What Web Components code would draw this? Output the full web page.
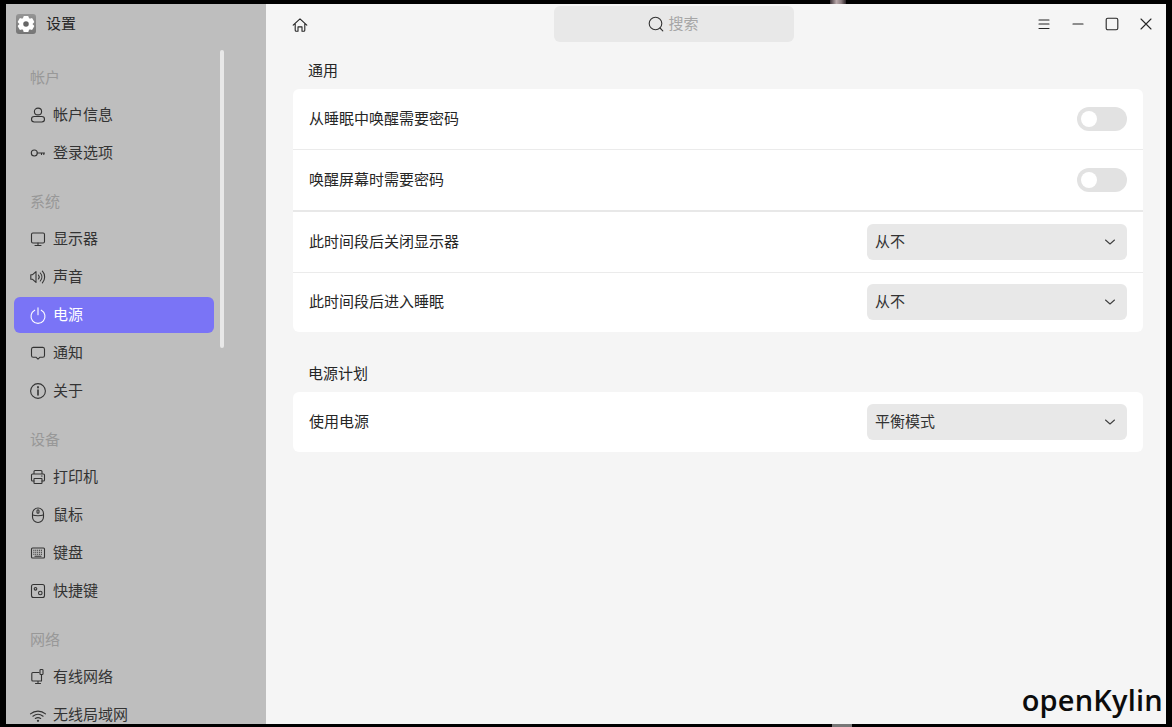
<!DOCTYPE html>
<html><head><meta charset="utf-8"><style>
html,body{margin:0;height:100%;background:#000;overflow:hidden}
body{font-family:"Noto Sans CJK SC","Noto Sans",sans-serif;font-size:15px;color:#262626}
</style></head><body>
<template id="t-icon"><style>:host{display:inline-flex;width:var(--s,18px);height:var(--s,18px);flex:none}svg{width:100%;height:100%;fill:none;stroke:currentColor;stroke-width:1.1;stroke-linecap:round;stroke-linejoin:round}</style><svg viewBox="0 0 18 18"></svg></template>
<script>
const ICONS={
user:'<ellipse cx="9" cy="5.5" rx="3.6" ry="3.400"/><rect x="2.500" y="10.500" width="13" height="5.500" rx="2.700"/>',
key:'<circle cx="5.300" cy="9" r="3"/><path d="M8.300 9H15.500M12.500 9v1.500M14.800 9v1.500"/>',
monitor:'<rect x="2.500" y="3" width="13" height="10" rx="1.400"/><path d="M9 13v2.500M6 15.500h6"/>',
sound:'<path d="M1.800 6.700h1.800L7 3.600v10.800L3.600 11.300H1.800zM9.400 7a3 3 0 0 1 0 4M11.300 5a6 6 0 0 1 0 8M13.400 3.200a8.600 8.600 0 0 1 0 11.600"/>',
power:'<path d="M9 1.800v7M5.700 4.200a7 7 0 1 0 6.600 0"/>',
notice:'<path d="M4.200 3.400h9.600a1.800 1.800 0 0 1 1.700 1.800v6.200a1.800 1.800 0 0 1-1.700 1.800h-2.700L9 15.200l-2.100-2H4.200a1.800 1.800 0 0 1-1.700-1.800V5.200a1.800 1.800 0 0 1 1.700-1.800z"/>',
info:'<circle cx="9" cy="9" r="7.400"/><path d="M9 8v5" stroke-width="1.600"/><path d="M9 5v.6" stroke-width="1.800"/>',
printer:'<path d="M5 6V3.500a1 1 0 0 1 1-1h6a1 1 0 0 1 1 1V6M5 13H3.500a1 1 0 0 1-1-1V7a1 1 0 0 1 1-1h11a1 1 0 0 1 1 1v5a1 1 0 0 1-1 1H13"/><rect x="5" y="10.500" width="8" height="5" rx=".6"/><path d="M12.500 8h.6"/>',
mouse:'<rect x="3.500" y="2" width="11" height="14.500" rx="5.500"/><path d="M3.800 9c2 1 8.400 1 10.400 0"/><rect x="8" y="3.800" width="2" height="3.500" rx="1"/>',
keyboard:'<rect x="2.500" y="4" width="13" height="10" rx="1"/><path d="M4.300 6.300h9.400M4.300 8.300h9.400M4.300 10.300h9.400" stroke-dasharray="1.100 .8" stroke-linecap="butt"/><path d="M6 12.200h6"/>',
shortcut:'<rect x="2.500" y="2.500" width="13" height="13" rx="2"/><circle cx="6.500" cy="6.800" r="1.300"/><circle cx="11.300" cy="11" r="1.800"/>',
wired:'<path d="M10 4.500H3.800a1 1 0 0 0-1 1v6.500a1 1 0 0 0 1 1H12.500V9M9 13v2.500M6.500 15.500h5"/><rect x="11" y="1.500" width="3" height="5" rx=".8"/><path d="M12.500 6.500v2.500"/>',
wifi:'<path d="M1.500 7.800c4.300-3.600 10.700-3.600 15 0M3.900 10.200c3-2.300 7.200-2.300 10.200 0M6.300 12.500c1.600-1 3.800-1 5.400 0"/><circle cx="9" cy="14.800" r=".6"/>',
home:'<path d="M2.200 9.200 9 2.800l6.800 6.400M4.200 8v6.200a1 1 0 0 0 1 1H7v-4.300h4v4.300h1.800a1 1 0 0 0 1-1V8"/>',
search:'<circle cx="8.500" cy="8.500" r="6.300"/><path d="M13 13l2.800 2.800"/>',
menu:'<path d="M4 5h10M4 9h10M4 13.500h10"/>',
min:'<path d="M4 9h10"/>',
max:'<rect x="3.200" y="3.200" width="11.600" height="11.600" rx="1.600"/>',
close:'<path d="M4 4l10 10M14 4L4 14"/>',
chev:'<path d="M4.500 7l4.500 4 4.500-4" stroke-width="1.100"/>'
};
function tpl(html){const t=document.createElement('template');t.innerHTML=html;return t}
function def(name,html,init){customElements.define(name,class extends HTMLElement{constructor(){super();this.attachShadow({mode:'open'}).appendChild(tpl(html).content.cloneNode(true));}connectedCallback(){init&&init.call(this)}})}
customElements.define('x-icon',class extends HTMLElement{
static get observedAttributes(){return['name']}
constructor(){super();const r=this.attachShadow({mode:'open'});r.appendChild(document.getElementById('t-icon').content.cloneNode(true));}
attributeChangedCallback(){this.shadowRoot.querySelector('svg').innerHTML=ICONS[this.getAttribute('name')]||''}
});
def('wall-paper',`<style>:host{display:block;position:absolute;inset:0}
.a{position:absolute;left:830px;top:0;width:16px;height:4px;background:linear-gradient(90deg,#3a3035,#b9a8aa 40%,#8c7d80 70%,#2a2225)}
.b{position:absolute;left:832px;bottom:0;width:20px;height:3px;background:#777}</style><div class="a"></div><div class="b"></div>`);
def('app-window',`<style>:host{display:flex;position:absolute;inset:4px 6px 3px 6px;overflow:hidden;background:#f5f5f5}</style><slot name="side"></slot><slot></slot>`);
def('side-bar',`<style>:host{display:flex;flex-direction:column;width:260px;flex:none;background:#bebebe;overflow:hidden;position:relative}
.title{display:flex;align-items:center;gap:10px;height:40px;padding:0 0 0 10px;flex:none}
.title span.t{line-height:20px;padding-bottom:2px;color:#262626}
.logo{width:20px;height:20px;border-radius:3px;background:linear-gradient(#959595,#757575);display:flex;align-items:center;justify-content:center}
.list{display:flex;flex-direction:column;padding:0 8px;width:200px;margin-top:5px}
.bar{position:absolute;left:214px;top:46px;width:4px;height:298px;border-radius:2px;background:#e8e8e8}
</style><div class="title"><span class="logo"><svg width="20" height="20" viewBox="0 0 18 18"><path fill="#fff" stroke="#fff" stroke-width="1.600" stroke-linejoin="round" d="M7.500 2.500h3l.5 1.800 1.300.7 1.800-.5 1.500 2.600-1.300 1.300v1.200l1.300 1.300-1.500 2.600-1.800-.5-1.300.7-.5 1.800h-3l-.5-1.800-1.300-.7-1.800.5-1.500-2.600 1.300-1.300V8.400L2.400 7.100l1.500-2.600 1.800.5 1.300-.7z"/><circle cx="9" cy="9" r="2.500" fill="#666"/></svg></span><span class="t"><slot name="title"></slot></span></div><div class="list"><slot></slot></div><div class="bar"></div>`);
def('side-head',`<style>:host{display:block;height:20px;line-height:20px;padding:0 0 0 16px;color:#989898;font-size:15px;margin:19px 0 9px}span{display:block;margin-top:-1px}</style><span><slot></slot></span>`);
def('side-item',`<style>:host{display:flex;align-items:center;gap:6px;height:36px;flex:none;margin-bottom:2px;padding-left:15px;border-radius:6px;color:#333;line-height:20px}:host([active]){background:#7a74f6;color:#fff}x-icon{--s:18px}span{padding-bottom:3px}</style><x-icon></x-icon><span><slot></slot></span>`,function(){this.shadowRoot.querySelector('x-icon').setAttribute('name',this.getAttribute('icon'))});
def('main-pane',`<style>:host{display:flex;flex-direction:column;flex:1;min-width:0;position:relative}
.top{display:flex;align-items:center;height:40px;flex:none;position:relative;padding:0 11px 0 25px}
.content{padding:0 23px 0 27px;display:flex;flex-direction:column}
.spacer{flex:1}
.search{position:absolute;left:288px;top:2px;width:240px;height:36px;border-radius:6px;background:#e8e8e8;display:flex;align-items:center;justify-content:center;gap:3px;color:#a6a6a6;line-height:20px}
.search span{padding-bottom:3px}
.search x-icon{--s:18px;color:#333;margin-left:-2px}
.btns{display:flex;gap:16px;color:#262626}
.home{color:#262626;margin-top:2px}
</style><div class="top"><x-icon class="home" name="home"></x-icon><div class="search"><x-icon name="search"></x-icon><span>搜索</span></div><div class="spacer"></div><div class="btns"><x-icon name="menu"></x-icon><x-icon name="min"></x-icon><x-icon name="max"></x-icon><x-icon name="close"></x-icon></div></div><div class="content"><slot></slot></div>`);
def('set-section',`<style>:host{display:block;margin-bottom:15px}.h{height:45px;box-sizing:border-box;padding:16px 0 0 15px;line-height:20px;color:#262626}.card{background:#fff;border-radius:6px;overflow:hidden;display:flex;flex-direction:column}</style><div class="h"><slot name="head"></slot></div><div class="card"><slot></slot></div>`);
def('set-row',`<style>:host{display:flex;align-items:center;justify-content:space-between;padding:0 16px;height:61px;box-sizing:border-box;border-bottom:1px solid #ebebeb;line-height:20px;color:#262626}:host([thick]){height:62px;border-bottom:2px solid #e8e8e8}:host([last]){height:60px;border-bottom:0}span{padding-bottom:2px}</style><span><slot name="label"></slot></span><slot></slot>`);
def('set-toggle',`<style>:host{display:flex;align-items:center;width:50px;height:24px;border-radius:12px;background:#e2e2e2;padding-left:4px;box-sizing:border-box}i{display:block;width:16px;height:16px;border-radius:50%;background:#fff}</style><i></i>`);
def('set-select',`<style>:host{display:flex;align-items:center;justify-content:space-between;width:260px;height:36px;border-radius:6px;background:#e8e8e8;padding:0 8px;box-sizing:border-box;color:#333;line-height:20px}x-icon{--s:18px;color:#404040}span{padding-bottom:3px}</style><span><slot></slot></span><x-icon name="chev"></x-icon>`);
def('brand-mark',`<style>:host{position:absolute;right:3px;bottom:6px;font-family:"Open Sans","Noto Sans",sans-serif;font-size:29px;font-weight:600;line-height:36px;color:#0c0c0c;letter-spacing:.2px}</style><slot></slot>`);
</script>
<wall-paper></wall-paper>
<app-window>
<side-bar slot="side"><span slot="title">设置</span>
<side-head>帐户</side-head>
<side-item icon="user">帐户信息</side-item>
<side-item icon="key">登录选项</side-item>
<side-head>系统</side-head>
<side-item icon="monitor">显示器</side-item>
<side-item icon="sound">声音</side-item>
<side-item icon="power" active>电源</side-item>
<side-item icon="notice">通知</side-item>
<side-item icon="info">关于</side-item>
<side-head>设备</side-head>
<side-item icon="printer">打印机</side-item>
<side-item icon="mouse">鼠标</side-item>
<side-item icon="keyboard">键盘</side-item>
<side-item icon="shortcut">快捷键</side-item>
<side-head>网络</side-head>
<side-item icon="wired">有线网络</side-item>
<side-item icon="wifi">无线局域网</side-item>
</side-bar>
<main-pane>
<set-section><span slot="head">通用</span>
<set-row><span slot="label">从睡眠中唤醒需要密码</span><set-toggle></set-toggle></set-row>
<set-row thick><span slot="label">唤醒屏幕时需要密码</span><set-toggle></set-toggle></set-row>
<set-row><span slot="label">此时间段后关闭显示器</span><set-select>从不</set-select></set-row>
<set-row last style="height:59px;padding-bottom:1px"><span slot="label">此时间段后进入睡眠</span><set-select>从不</set-select></set-row>
</set-section>
<set-section><span slot="head">电源计划</span>
<set-row last><span slot="label">使用电源</span><set-select>平衡模式</set-select></set-row>
</set-section>
</main-pane>
<brand-mark>openKylin</brand-mark>
</app-window>
</body></html>
